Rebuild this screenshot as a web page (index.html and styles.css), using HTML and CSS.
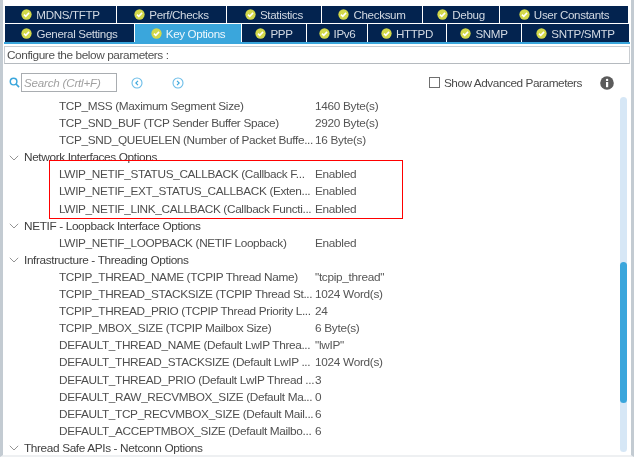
FILE: index.html
```html
<!DOCTYPE html>
<html lang="en">
<head>
<meta charset="utf-8">
<title>Parameter Settings</title>
<link rel="stylesheet" href="styles.css">
</head>
<body>
<svg class="defs" width="0" height="0" aria-hidden="true">
  <symbol id="ok" viewBox="0 0 12 12">
    <circle cx="6" cy="6" r="5.6" fill="#d3d84a"/>
    <path d="M3.2 6.1 5.2 8 8.8 4.2" fill="none" stroke="#fff" stroke-width="1.7"/>
  </symbol>
</svg>
<main class="app">
  <div class="tabs">
    <div class="tabrow tabrow-top">
      <div class="tab"><svg class="ok"><use href="#ok"/></svg>MDNS/TFTP</div>
      <div class="tab"><svg class="ok"><use href="#ok"/></svg>Perf/Checks</div>
      <div class="tab"><svg class="ok"><use href="#ok"/></svg>Statistics</div>
      <div class="tab"><svg class="ok"><use href="#ok"/></svg>Checksum</div>
      <div class="tab"><svg class="ok"><use href="#ok"/></svg>Debug</div>
      <div class="tab"><svg class="ok"><use href="#ok"/></svg>User Constants</div>
    </div>
    <div class="tabrow tabrow-bottom">
      <div class="tab"><svg class="ok"><use href="#ok"/></svg>General Settings</div>
      <div class="tab active"><svg class="ok"><use href="#ok"/></svg>Key Options</div>
      <div class="tab"><svg class="ok"><use href="#ok"/></svg>PPP</div>
      <div class="tab"><svg class="ok"><use href="#ok"/></svg>IPv6</div>
      <div class="tab"><svg class="ok"><use href="#ok"/></svg>HTTPD</div>
      <div class="tab"><svg class="ok"><use href="#ok"/></svg>SNMP</div>
      <div class="tab"><svg class="ok"><use href="#ok"/></svg>SNTP/SMTP</div>
    </div>
  </div>
  <div class="configure">Configure the below parameters :</div>
  <div class="toolbar">
    <svg class="search-icon" viewBox="0 0 12 12"><circle cx="5" cy="5" r="3.6" fill="none" stroke="#3aa6dc" stroke-width="1.6"/><path d="M7.6 7.6 11 11" stroke="#3aa6dc" stroke-width="1.8"/></svg>
    <div class="search">Search (Crtl+F)</div>
    <svg class="nav nav-prev" viewBox="0 0 12 12"><circle cx="6" cy="6" r="5" fill="none" stroke="#6cbde8" stroke-width="1.1"/><path d="M7 3.8 4.8 6 7 8.2" fill="none" stroke="#3aa6dc" stroke-width="1.1"/></svg>
    <svg class="nav nav-next" viewBox="0 0 12 12"><circle cx="6" cy="6" r="5" fill="none" stroke="#6cbde8" stroke-width="1.1"/><path d="M5 3.8 7.2 6 5 8.2" fill="none" stroke="#3aa6dc" stroke-width="1.1"/></svg>
    <label class="advanced"><span class="checkbox"></span>Show Advanced Parameters</label>
    <svg class="info" viewBox="0 0 14 14"><circle cx="7" cy="7" r="6.8" fill="#5b5b5b"/><rect x="6" y="6" width="2.2" height="5.2" fill="#fff"/><circle cx="7.1" cy="3.9" r="1.2" fill="#fff"/></svg>
  </div>
  <div class="list">
    <div class="row"><span class="name">TCP_MSS (Maximum Segment Size)</span><span class="value">1460 Byte(s)</span></div>
    <div class="row"><span class="name">TCP_SND_BUF (TCP Sender Buffer Space)</span><span class="value">2920 Byte(s)</span></div>
    <div class="row"><span class="name">TCP_SND_QUEUELEN (Number of Packet Buffe...</span><span class="value">16 Byte(s)</span></div>
    <div class="group"><svg class="chev" viewBox="0 0 10 6"><path d="M.8.8 5 5 9.2.8" fill="none" stroke="#888" stroke-width=".9"/></svg>Network Interfaces Options</div>
    <div class="row"><span class="name">LWIP_NETIF_STATUS_CALLBACK (Callback F...</span><span class="value">Enabled</span></div>
    <div class="row"><span class="name">LWIP_NETIF_EXT_STATUS_CALLBACK (Exten...</span><span class="value">Enabled</span></div>
    <div class="row"><span class="name">LWIP_NETIF_LINK_CALLBACK (Callback Functi...</span><span class="value">Enabled</span></div>
    <div class="group"><svg class="chev" viewBox="0 0 10 6"><path d="M.8.8 5 5 9.2.8" fill="none" stroke="#888" stroke-width=".9"/></svg>NETIF - Loopback Interface Options</div>
    <div class="row"><span class="name">LWIP_NETIF_LOOPBACK (NETIF Loopback)</span><span class="value">Enabled</span></div>
    <div class="group"><svg class="chev" viewBox="0 0 10 6"><path d="M.8.8 5 5 9.2.8" fill="none" stroke="#888" stroke-width=".9"/></svg>Infrastructure - Threading Options</div>
    <div class="row"><span class="name">TCPIP_THREAD_NAME (TCPIP Thread Name)</span><span class="value">"tcpip_thread"</span></div>
    <div class="row"><span class="name">TCPIP_THREAD_STACKSIZE (TCPIP Thread St...</span><span class="value">1024 Word(s)</span></div>
    <div class="row"><span class="name">TCPIP_THREAD_PRIO (TCPIP Thread Priority L...</span><span class="value">24</span></div>
    <div class="row"><span class="name">TCPIP_MBOX_SIZE (TCPIP Mailbox Size)</span><span class="value">6 Byte(s)</span></div>
    <div class="row"><span class="name">DEFAULT_THREAD_NAME (Default LwIP Threa...</span><span class="value">"lwIP"</span></div>
    <div class="row"><span class="name">DEFAULT_THREAD_STACKSIZE (Default LwIP ...</span><span class="value">1024 Word(s)</span></div>
    <div class="row"><span class="name">DEFAULT_THREAD_PRIO (Default LwIP Thread ...</span><span class="value">3</span></div>
    <div class="row"><span class="name">DEFAULT_RAW_RECVMBOX_SIZE (Default Ma...</span><span class="value">0</span></div>
    <div class="row"><span class="name">DEFAULT_TCP_RECVMBOX_SIZE (Default Mail...</span><span class="value">6</span></div>
    <div class="row"><span class="name">DEFAULT_ACCEPTMBOX_SIZE (Default Mailbo...</span><span class="value">6</span></div>
    <div class="group"><svg class="chev" viewBox="0 0 10 6"><path d="M.8.8 5 5 9.2.8" fill="none" stroke="#888" stroke-width=".9"/></svg>Thread Safe APIs - Netconn Options</div>
    <div class="highlight"></div>
    <div class="scrollbar"><div class="thumb"></div></div>
  </div>
</main>
</body>
</html>
```
FILE: styles.css
```css
* { box-sizing: border-box; }
html, body { margin: 0; height: 100%; background: #fff; }
body { overflow: hidden; font-family: "Liberation Sans", Arial, sans-serif; font-size: 11.8px; letter-spacing: -.3px; }
.defs { position: absolute; }
.app {
  width: 634px; height: 457px; padding: 6px 0 0 2px;
  border-left: 3px solid #c3cbd2; border-right: 3px solid #c3cbd2;
  border-bottom: 2px solid #eef0f2;
  display: flex; flex-direction: column;
  color: #4a4a4a;
  filter: blur(.25px);
}
.tabs { width: 623px; }
.tabrow { display: grid; gap: 1px; background: #fff; }
.tabrow-top { height: 17px; grid-template-columns: 111px 109px 94px 100px 76px 128px; }
.tabrow-bottom { height: 18px; margin-top: 1px; grid-template-columns: 129px 106px 64px 60px 78px 74px 107px; }
.tab {
  display: flex; align-items: center; justify-content: center; gap: 4px;
  background: #03234f; color: #d3dae3; white-space: nowrap;
  font-size: 11.6px; letter-spacing: -.33px;
}
.tab.active { background: #3aa6dc; color: #eef7fc; }
.ok { width: 11px; height: 11px; flex: none; }
.configure {
  margin-top: 4px; height: 18px; width: 626px; margin-left: -1px;
  border: 1px solid #c9cdd1; border-bottom-color: #b5babf;
  line-height: 16px; padding-left: 2px; color: #4f4f4f; letter-spacing: -.4px;
  box-shadow: 0 -2px 0 #fff, 0 -4px 0 #3aa6dc;
}
.toolbar { position: relative; height: 32px; display: flex; align-items: center; padding-top: 5px; }
.search-icon { width: 11px; height: 11px; margin-left: 4px; flex: none; }
.search {
  width: 96px; height: 19px; margin-left: 1px; border: 1px solid #a9adb1;
  color: #a0a0a0; font-style: italic; line-height: 17px; padding-left: 2px;
  font-size: 11.6px; letter-spacing: -.2px;
}
.nav { width: 12px; height: 12px; flex: none; }
.nav-prev { margin-left: 14px; }
.nav-next { margin-left: 29px; }
.advanced { display: flex; align-items: center; gap: 4px; margin-left: auto; margin-right: 49px; letter-spacing: -.45px; }
.checkbox { width: 11px; height: 11px; border: 1px solid #6f6f6f; background: #fff; }
.info { width: 14px; height: 14px; position: absolute; left: 595px; top: 12px; }
.list { position: relative; flex: 1; margin-top: 1px; padding-top: 1px; overflow: hidden; margin-left: -5px; width: 631px; }
.row, .group { height: 17.1px; line-height: 17.1px; white-space: nowrap; display: flex; }
.name { width: 315px; padding-left: 59px; flex: none; color: #4f4f4f; overflow: hidden; letter-spacing: -.34px; }
.value { color: #555; }
.group { color: #404040; padding-left: 9px; align-items: center; letter-spacing: -.36px; }
.chev { width: 10px; height: 6px; margin-right: 5px; flex: none; }
.highlight { position: absolute; left: 49px; top: 63px; width: 354px; height: 59px; border: 1px solid #f00; }
.scrollbar { position: absolute; left: 620px; top: 0; width: 7px; height: 355px; background: #d6e7f6; border-radius: 4px; }
.thumb { position: absolute; left: 0; top: 165px; width: 7px; height: 141px; background: #3aa6dc; border-radius: 4px; }
```
